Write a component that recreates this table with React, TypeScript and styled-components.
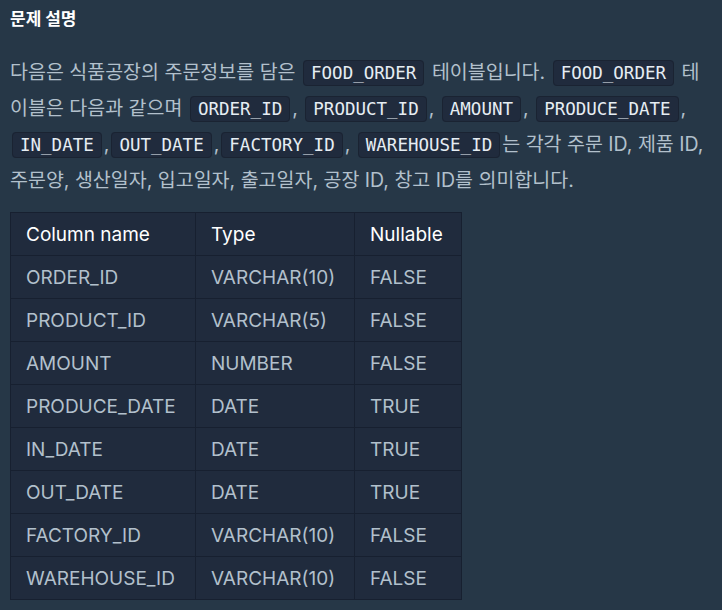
import React from "react";
import styled, { createGlobalStyle } from "styled-components";

const GlobalStyle = createGlobalStyle`
  html, body {
    margin: 0;
    padding: 0;
    background: #263747;
  }
  body {
    font-family: Inter, "Noto Sans CJK KR", sans-serif;
  }
`;

const Page = styled.section`
  width: 722px;
  height: 610px;
  box-sizing: border-box;
  padding: 6px 10px 0 10px;
  background: #263747;
  overflow: hidden;
`;

const Title = styled.h5`
  margin: 0;
  color: #ffffff;
  font-family: "Noto Sans CJK KR", sans-serif;
  font-size: 17px;
  font-weight: 700;
  line-height: 24px;
`;

const Description = styled.p`
  margin: 24px 0 14px 0;
  color: #b2c0cc;
  font-family: Inter, "Noto Sans CJK KR", sans-serif;
  font-size: 19.5px;
  line-height: 36px;
`;

const Code = styled.code`
  font-family: "DejaVu Sans Mono", monospace;
  font-size: 17.5px;
  line-height: 20px;
  color: #e6edf3;
  background: #202b3d;
  border: 1px solid #1a2332;
  border-radius: 4px;
  padding: 2px 7px;
  margin: 0 2px;
`;

const Table = styled.table`
  border-collapse: collapse;
  background: #202b3d;
  font-family: Inter, sans-serif;
  font-size: 19px;
`;

const HeadCell = styled.th<{ $w: number }>`
  width: ${(p) => p.$w}px;
  height: 42px;
  padding: 0 15px;
  text-align: left;
  font-weight: 400;
  color: #ffffff;
  border: 1px solid #172030;
`;

const Cell = styled.td`
  height: 42px;
  padding: 0 15px;
  color: #b2c0cc;
  border: 1px solid #172030;
  white-space: nowrap;
`;

const columns = [
  ["ORDER_ID", "VARCHAR(10)", "FALSE"],
  ["PRODUCT_ID", "VARCHAR(5)", "FALSE"],
  ["AMOUNT", "NUMBER", "FALSE"],
  ["PRODUCE_DATE", "DATE", "TRUE"],
  ["IN_DATE", "DATE", "TRUE"],
  ["OUT_DATE", "DATE", "TRUE"],
  ["FACTORY_ID", "VARCHAR(10)", "FALSE"],
  ["WAREHOUSE_ID", "VARCHAR(10)", "FALSE"],
];

export default function App() {
  return (
    <Page>
      <GlobalStyle />
      <Title>문제 설명</Title>
      <Description>
        다음은 식품공장의 주문정보를 담은 <Code>FOOD_ORDER</Code> 테이블입니다.{" "}
        <Code>FOOD_ORDER</Code> 테이블은 다음과 같으며 <Code>ORDER_ID</Code>,{" "}
        <Code>PRODUCT_ID</Code>, <Code>AMOUNT</Code>, <Code>PRODUCE_DATE</Code>,{" "}
        <Code>IN_DATE</Code>,<Code>OUT_DATE</Code>,<Code>FACTORY_ID</Code>,{" "}
        <Code>WAREHOUSE_ID</Code>는 각각 주문 ID, 제품 ID, 주문양, 생산일자, 입고일자,
        출고일자, 공장 ID, 창고 ID를 의미합니다.
      </Description>
      <Table>
        <thead>
          <tr>
            <HeadCell $w={154}>Column name</HeadCell>
            <HeadCell $w={128}>Type</HeadCell>
            <HeadCell $w={76}>Nullable</HeadCell>
          </tr>
        </thead>
        <tbody>
          {columns.map((row) => (
            <tr key={row[0]}>
              {row.map((v, i) => (
                <Cell key={i}>{v}</Cell>
              ))}
            </tr>
          ))}
        </tbody>
      </Table>
    </Page>
  );
}
